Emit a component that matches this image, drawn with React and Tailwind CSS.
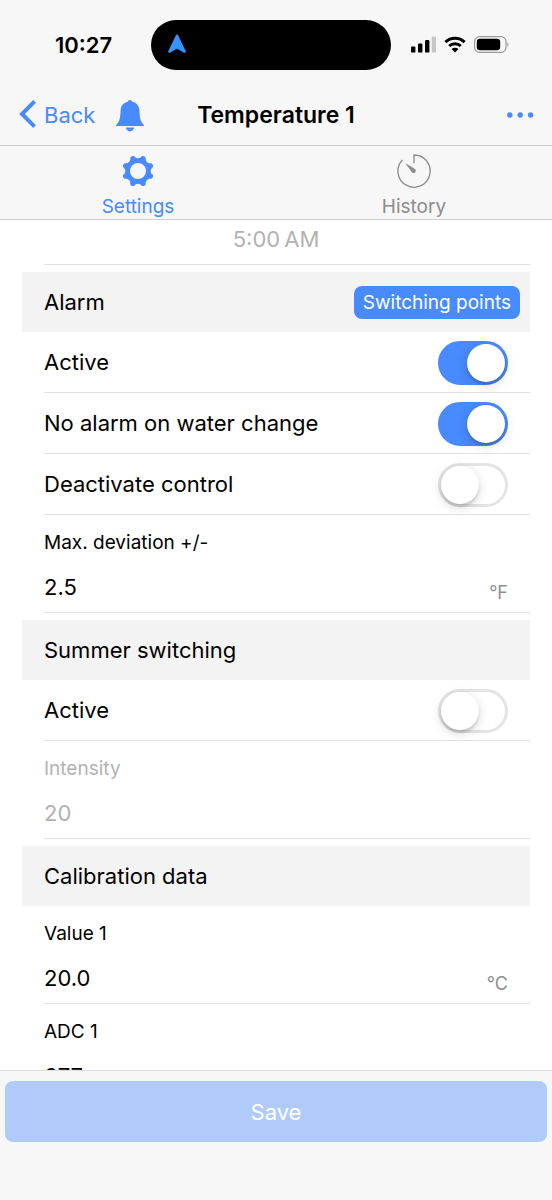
import { useState } from "react";

// outline of the eight-toothed cog, 36x36 box
const polar = (deg, r) => {
  const a = (deg * Math.PI) / 180;
  return `${(18 + r * Math.sin(a)).toFixed(2)} ${(18 - r * Math.cos(a)).toFixed(2)}`;
};
const cogPath =
  [0, 1, 2, 3, 4, 5, 6, 7]
    .map((i) => {
      const c = 22.5 + i * 45;
      return `${i === 0 ? "M" : "L"}${polar(c - 8, 15.4)} Q${polar(c, 17)} ${polar(c + 8, 15.4)} C${polar(c + 12, 12.2)} ${polar(c + 33, 12.2)} ${polar(c + 37, 15.4)}`;
    })
    .join(" ") + " Z M18 10 A8 8 0 1 0 18 26 A8 8 0 1 0 18 10 Z";

function StatusBar() {
  return (
    <div className="grid grid-cols-[1fr_240px_1fr] items-center h-[89px] pr-[10px]">
      <span className="pt-0.5 pl-4 text-center text-[22px] font-semibold">10:27</span>
      <div className="flex items-center h-[50px] rounded-full bg-black pl-4">
        <svg width="20" height="22" viewBox="0 0 20 22" aria-hidden="true">
          <path
            d="M10 1.8 L17.6 17.6 L10 13.2 L2.4 17.6 Z"
            fill="#3395ff"
            stroke="#3395ff"
            strokeWidth="2.4"
            strokeLinejoin="round"
          />
        </svg>
      </div>
      <div className="flex items-center gap-2 pl-5">
        <svg width="25" height="17" viewBox="0 0 25 17" aria-hidden="true">
          <rect x="0" y="10.4" width="4.4" height="6.2" rx="1.2" />
          <rect x="7" y="7.4" width="4.4" height="9.2" rx="1.2" />
          <rect x="14" y="4" width="4.4" height="12.6" rx="1.2" />
          <rect x="20.8" y="0.6" width="4.2" height="16" rx="1.2" fill="#c6c6c6" />
        </svg>
        <svg width="22" height="17" viewBox="0 0 22 17" aria-hidden="true">
          <path d="M1.4 6.2 A13.8 13.8 0 0 1 20.6 6.2" fill="none" stroke="#000" strokeWidth="3" />
          <path d="M5.2 10 A8.4 8.4 0 0 1 16.8 10" fill="none" stroke="#000" strokeWidth="3" />
          <path d="M11 16.4 L7.6 13 A4.9 4.9 0 0 1 14.4 13 Z" />
        </svg>
        <svg width="36" height="17" viewBox="0 0 36 17" aria-hidden="true">
          <rect x="0.6" y="0.6" width="31.4" height="15.8" rx="5" fill="none" stroke="#9b9b9b" strokeWidth="1.2" />
          <rect x="2.8" y="2.8" width="23.4" height="11.4" rx="3.2" />
          <path d="M33.4 6 Q35.8 8.5 33.4 11 Z" fill="#9b9b9b" />
        </svg>
      </div>
    </div>
  );
}

function NavBar() {
  return (
    <div className="grid grid-cols-[1fr_auto_1fr] items-center h-[57px] px-[19px] pb-1 border-b border-[#cfcfd0]">
      <div className="flex items-center text-[#488aff]">
        <button className="flex items-center gap-2 text-[22px]">
          <svg width="17" height="30" viewBox="0 0 17 30" aria-hidden="true">
            <path d="M15.6 1.4 L3 14 L15.6 26.6" fill="none" stroke="#488aff" strokeWidth="4" />
          </svg>
          Back
        </button>
        <button aria-label="Notifications" className="ml-5">
          <svg width="30" height="34" viewBox="0 0 30 34" fill="#488aff" aria-hidden="true">
            <path d="M15 2 C16.3 2 17 2.8 17.2 3.7 C21.6 4.6 24.2 8 24.4 12.4 C24.6 17.4 25 22 26.8 24.4 C27.6 25.6 28.8 26.6 29.2 28 H0.8 C1.2 26.6 2.4 25.6 3.2 24.4 C5 22 5.4 17.4 5.6 12.4 C5.8 8 8.4 4.6 12.8 3.7 C13 2.8 13.7 2 15 2 Z" />
            <path d="M10.8 29.6 H19.2 C18.8 32 17.2 33.4 15 33.4 C12.8 33.4 11.2 32 10.8 29.6 Z" />
          </svg>
        </button>
      </div>
      <h1 className="text-[23px] font-semibold">Temperature 1</h1>
      <button aria-label="More" className="justify-self-end -mr-0.5">
        <svg width="30" height="8" viewBox="0 0 30 8" fill="#488aff" aria-hidden="true">
          <circle cx="4.8" cy="4" r="2.7" />
          <circle cx="15.2" cy="4" r="2.7" />
          <circle cx="25.6" cy="4" r="2.7" />
        </svg>
      </button>
    </div>
  );
}

function Tabs() {
  return (
    <nav className="grid grid-cols-2 h-[74px] border-b border-[#cfcfd0] text-[19px]">
      <a href="#settings" className="flex flex-col items-center pt-[7px] gap-1.5 text-[#488aff]">
        <svg width="36" height="36" viewBox="0 0 36 36" fill="#488aff" fillRule="evenodd" aria-hidden="true">
          <path d={cogPath} />
        </svg>
        <span className="leading-6">Settings</span>
      </a>
      <a href="#history" className="flex flex-col items-center pt-[7px] gap-1.5 text-[#8c8c8c]">
        <svg width="36" height="36" viewBox="0 0 36 36" aria-hidden="true">
          <path d="M18 10.2 V2 A16.1 16.1 0 1 1 6.4 7" fill="none" stroke="#8c8c8c" strokeWidth="1.3" />
          <path d="M9.2 10 L19 16 A2.2 2.2 0 0 1 16.1 19.4 Z" fill="#8c8c8c" />
        </svg>
        <span className="leading-6">History</span>
      </a>
    </nav>
  );
}

function SectionHeader({ title, children }) {
  return (
    <div className="flex items-center justify-between h-[60px] bg-[#f3f3f3] pl-[22px] pr-[10px]">
      <h2 className="text-[22px]">{title}</h2>
      {children}
    </div>
  );
}

function ToggleRow({ id, label, defaultOn }) {
  const [on, setOn] = useState(defaultOn);

  return (
    <div className="ml-[22px] flex items-center justify-between h-[61px] pt-0.5 pr-[22px] border-b border-[#e0e0e0]">
      <label htmlFor={id} className="pb-0.5 text-[22px]">{label}</label>
      <input
        id={id}
        type="checkbox"
        role="switch"
        checked={on}
        onChange={(e) => setOn(e.target.checked)}
        className="appearance-none w-[70px] h-[44px] rounded-full border-3 border-[#e4e4e4] bg-white checked:border-[#488aff] checked:bg-[#488aff] before:block before:size-[38px] before:rounded-full before:bg-white before:shadow-[0_3px_12px_rgba(0,0,0,0.16),0_3px_2px_rgba(0,0,0,0.12)] checked:before:translate-x-[26px]"
      />
    </div>
  );
}

function ValueRow({ id, label, value, unit, disabled }) {
  return (
    <div className={`ml-[22px] h-[98px] pt-4 pr-[22px] border-b border-[#e0e0e0] ${disabled ? "text-[#b2b2b2]" : ""}`}>
      <label htmlFor={id} className="block text-[19px] leading-6">{label}</label>
      <div className="flex items-center mt-3">
        <input
          id={id}
          type="text"
          inputMode="decimal"
          defaultValue={value}
          disabled={disabled}
          className="flex-1 min-w-0 h-10 text-[22px] bg-transparent outline-none"
        />
        {unit && <span className="pt-3 text-lg leading-6 text-[#8e8e93]">{unit}</span>}
      </div>
    </div>
  );
}

export default function App() {
  return (
    <div className="flex flex-col h-screen bg-white text-black font-['Inter',sans-serif]">
      <header className="shrink-0 bg-[#f7f7f7]">
        <StatusBar />
        <NavBar />
        <Tabs />
      </header>

      <main className="flex-1 min-h-0 overflow-hidden px-[22px]">
        <div className="ml-[22px] h-[45px] pr-[22px] border-b border-[#e0e0e0]">
          <input
            type="text"
            aria-label="Time"
            defaultValue={"5:00\u202fAM"}
            disabled
            className="w-full h-[38px] text-center text-[22px] text-[#b2b2b2]"
          />
        </div>

        <section className="mt-[7px]">
          <SectionHeader title="Alarm">
            <button className="h-[33px] px-[9px] pt-0.5 rounded-lg bg-[#488aff] text-[19px] text-white">Switching points</button>
          </SectionHeader>
          <ToggleRow id="alarm-active" label="Active" defaultOn={true} />
          <ToggleRow id="water-change" label="No alarm on water change" defaultOn={true} />
          <ToggleRow id="deactivate" label="Deactivate control" defaultOn={false} />
          <ValueRow id="deviation" label="Max. deviation +/-" value="2.5" unit="°F" />
        </section>

        <section className="mt-[7px]">
          <SectionHeader title="Summer switching" />
          <ToggleRow id="summer-active" label="Active" defaultOn={false} />
          <ValueRow id="intensity" label="Intensity" value="20" disabled />
        </section>

        <section className="mt-[7px]">
          <SectionHeader title="Calibration data" />
          <ValueRow id="value-1" label="Value 1" value="20.0" unit="°C" />
          <ValueRow id="adc-1" label="ADC 1" value="677" />
        </section>
      </main>

      <footer className="shrink-0 h-[130px] px-[5px] pt-[10px] bg-[#f7f7f7] border-t border-[#dcdcdc]">
        <button disabled className="w-full h-[61px] pt-0.5 rounded-lg bg-[#b0cbfa] text-[22px] text-white">
          Save
        </button>
      </footer>
    </div>
  );
}
